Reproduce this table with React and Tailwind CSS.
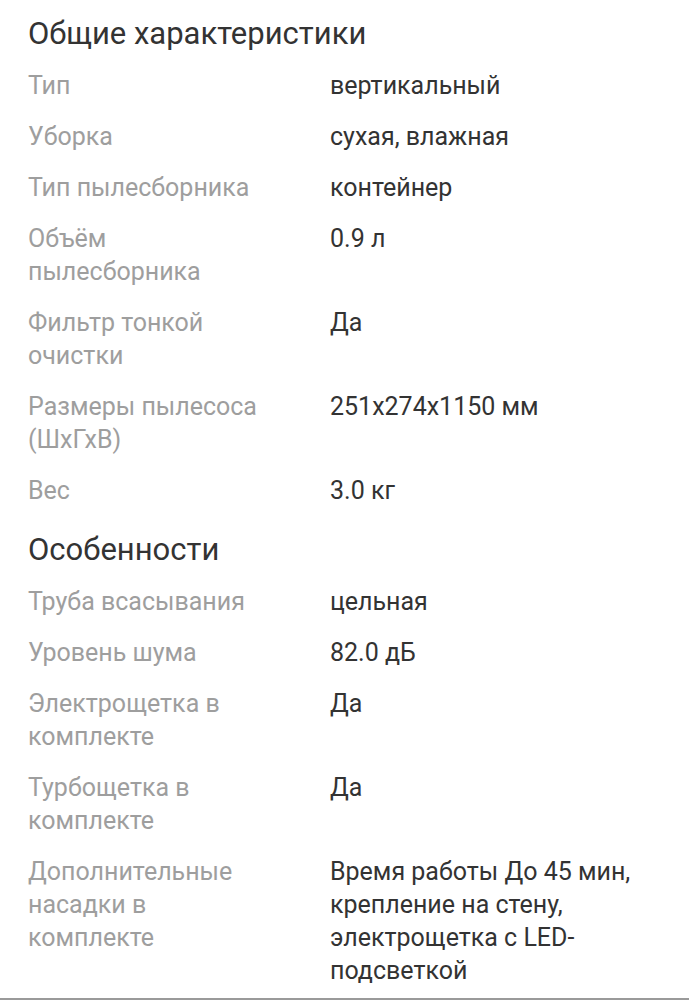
import React from 'react';

const general = [
  ['Тип', 'вертикальный'],
  ['Уборка', 'сухая, влажная'],
  ['Тип пылесборника', 'контейнер'],
  ['Объём пылесборника', '0.9 л'],
  ['Фильтр тонкой очистки', 'Да'],
  ['Размеры пылесоса (ШхГхВ)', '251x274x1150 мм'],
  ['Вес', '3.0 кг'],
];

const features = [
  ['Труба всасывания', 'цельная'],
  ['Уровень шума', '82.0 дБ'],
  ['Электрощетка в комплекте', 'Да'],
  ['Турбощетка в комплекте', 'Да'],
  ['Дополнительные насадки в комплекте', 'Время работы До 45 мин, крепление на стену, электрощетка с LED-подсветкой'],
];

function Section({ title, rows }) {
  return (
    <section>
      <h2 className="text-[31px] leading-[36px] text-[#333333] mb-[17px]">{title}</h2>
      <div className="flex flex-col gap-[18px]">
        {rows.map(([label, value]) => (
          <div key={label} className="flex text-[25px] leading-[33px]">
            <div className="w-[302px] pr-[60px] text-[#9e9e9e]">{label}</div>
            <div className="flex-1 pr-[28px] text-[#333333]">{value}</div>
          </div>
        ))}
      </div>
    </section>
  );
}

export default function App() {
  return (
    <div className="bg-white min-h-[1000px] font-['Roboto',sans-serif] flex flex-col">
      <div className="pl-[28px] pt-[16px] flex flex-col gap-[25px]">
        <Section title="Общие характеристики" rows={general} />
        <Section title="Особенности" rows={features} />
      </div>
      <div className="flex-1" />
      <div className="h-[2px] bg-[#9a9a9a]" />
    </div>
  );
}
